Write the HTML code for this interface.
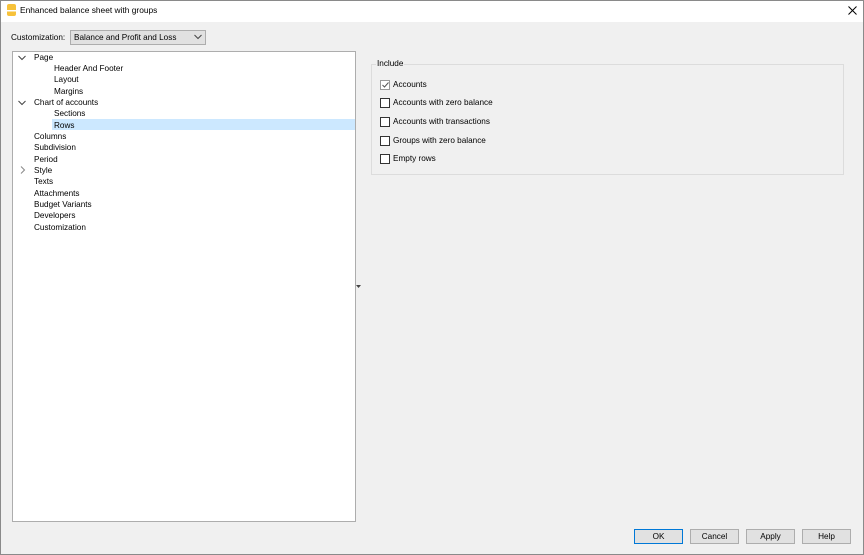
<!DOCTYPE html>
<html><head><style>
body{margin:0;width:864px;height:555px;position:relative;overflow:hidden;background:#f0f0f0;font-family:"Liberation Sans",sans-serif;font-size:8.2px;color:#000}
.win{position:absolute;left:0;top:0;width:864px;height:555px;background:#f0f0f0}
.bd{position:absolute;left:0;top:0;width:862px;height:553px;border:1px solid #8a8a8a;z-index:5}
.title{position:absolute;left:0;top:0;width:864px;height:22px;background:#fff}
.a{position:absolute;white-space:nowrap}
.tree{position:absolute;left:12px;top:51px;width:342px;height:469px;background:#fff;border:1px solid #adadad}
.r{position:absolute;height:11px;line-height:11px}
.cb{position:absolute;width:8px;height:8px;border:1px solid #333;background:#fff}
.btn{position:absolute;top:529px;width:47px;height:13px;border:1px solid #adadad;background:#e1e1e1;text-align:center;line-height:13px}
</style></head><body>
<div class="win">
<div class="bd"></div>
<div class="title"></div>
<svg class="a" style="left:7px;top:4px" width="9" height="12"><rect x="0" y="0" width="9" height="12" rx="2" fill="#f7c23a"/><rect x="0" y="6" width="9" height="1.5" fill="#fff"/></svg>
<div class="a" style="left:20px;top:5px;font-size:8.4px">Enhanced balance sheet with groups</div>
<svg class="a" style="left:848px;top:6px" width="9" height="9"><path d="M0.5 0.5L8.5 8.5M8.5 0.5L0.5 8.5" stroke="#000" stroke-width="1"/></svg>
<div class="a" style="left:11px;top:33px">Customization:</div>
<div class="a" style="left:70px;top:30px;width:131px;height:13px;border:1px solid #adadad;background:#e1e1e1;line-height:13px;padding-left:3px">Balance and Profit and Loss</div>
<svg class="a" style="left:194px;top:34px" width="8" height="6"><path d="M0.5 1L4 4.5L7.5 1" stroke="#444" fill="none"/></svg>
<div class="tree">
<div class="r" style="left:39px;top:67px;width:303px;background:#cce8ff"></div>
<svg class="a" style="left:5px;top:3px" width="8" height="6"><path d="M0.5 1L4 4.5L7.5 1" stroke="#444" fill="none"/></svg>
<svg class="a" style="left:5px;top:48px" width="8" height="6"><path d="M0.5 1L4 4.5L7.5 1" stroke="#444" fill="none"/></svg>
<svg class="a" style="left:7px;top:114px" width="6" height="8"><path d="M1 0.5L4.5 4L1 7.5" stroke="#888" fill="none"/></svg>
<div class="r" style="left:21px;top:0px">Page</div>
<div class="r" style="left:41px;top:11px">Header And Footer</div>
<div class="r" style="left:41px;top:22px">Layout</div>
<div class="r" style="left:41px;top:34px">Margins</div>
<div class="r" style="left:21px;top:45px">Chart of accounts</div>
<div class="r" style="left:41px;top:56px">Sections</div>
<div class="r" style="left:41px;top:68px">Rows</div>
<div class="r" style="left:21px;top:79px">Columns</div>
<div class="r" style="left:21px;top:90px">Subdivision</div>
<div class="r" style="left:21px;top:102px">Period</div>
<div class="r" style="left:21px;top:113px">Style</div>
<div class="r" style="left:21px;top:124px">Texts</div>
<div class="r" style="left:21px;top:136px">Attachments</div>
<div class="r" style="left:21px;top:147px">Budget Variants</div>
<div class="r" style="left:21px;top:158px">Developers</div>
<div class="r" style="left:21px;top:170px">Customization</div>
</div>
<svg class="a" style="left:356px;top:285px" width="5" height="4"><path d="M0 0H5L2.5 3Z" fill="#444"/></svg>
<div class="a" style="left:371px;top:64px;width:471px;height:109px;border:1px solid #dcdcdc"></div>
<div class="a" style="left:376px;top:59px;background:#f0f0f0;padding:0 1px">Include</div>
<div class="cb" style="left:380px;top:80px;border-color:#999"></div>
<svg class="a" style="left:382px;top:82px" width="7" height="6"><path d="M0.5 3L2.5 5L6.5 0.5" stroke="#555" fill="none"/></svg>
<div class="a" style="left:393px;top:80px">Accounts</div>
<div class="cb" style="left:380px;top:98px"></div><div class="a" style="left:393px;top:98px">Accounts with zero balance</div>
<div class="cb" style="left:380px;top:117px"></div><div class="a" style="left:393px;top:117px">Accounts with transactions</div>
<div class="cb" style="left:380px;top:136px"></div><div class="a" style="left:393px;top:136px">Groups with zero balance</div>
<div class="cb" style="left:380px;top:154px"></div><div class="a" style="left:393px;top:154px">Empty rows</div>
<div class="btn" style="left:634px;border-color:#0078d7">OK</div>
<div class="btn" style="left:690px">Cancel</div>
<div class="btn" style="left:746px">Apply</div>
<div class="btn" style="left:802px">Help</div>
</div>
</body></html>
